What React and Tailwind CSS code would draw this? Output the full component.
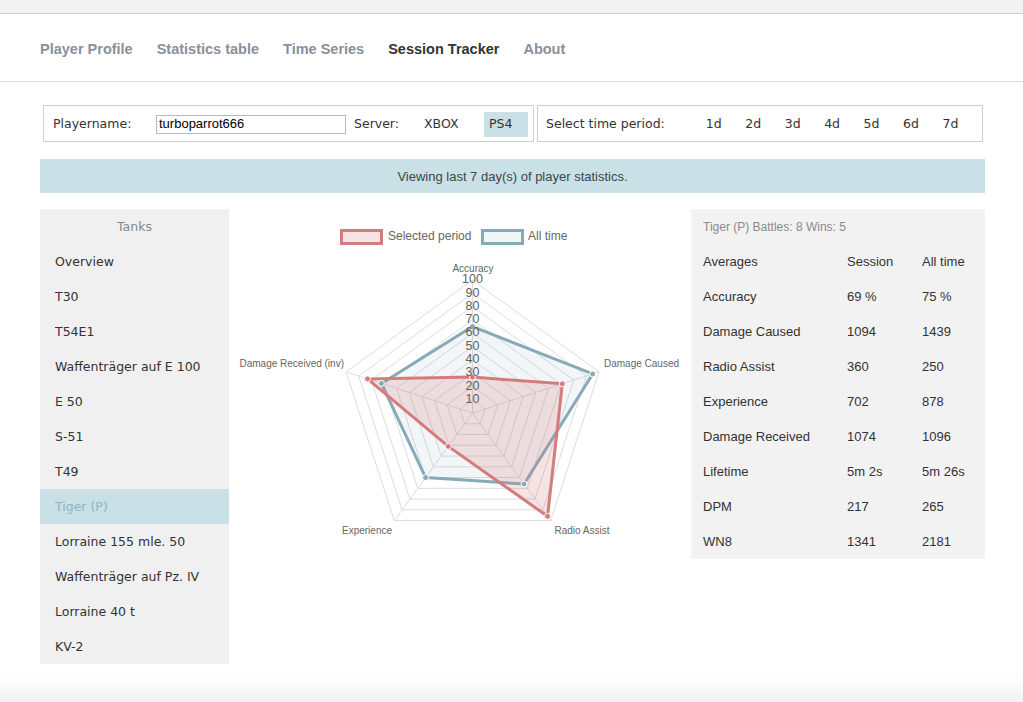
import React from 'react';

const navItems = ['Player Profile', 'Statistics table', 'Time Series', 'Session Tracker', 'About'];
const periods = ['1d', '2d', '3d', '4d', '5d', '6d', '7d'];
const tanks = [
  'Overview',
  'T30',
  'T54E1',
  'Waffenträger auf E 100',
  'E 50',
  'S-51',
  'T49',
  'Tiger (P)',
  'Lorraine 155 mle. 50',
  'Waffenträger auf Pz. IV',
  'Lorraine 40 t',
  'KV-2'
];
const rows = [
  ['Accuracy', '69 %', '75 %'],
  ['Damage Caused', '1094', '1439'],
  ['Radio Assist', '360', '250'],
  ['Experience', '702', '878'],
  ['Damage Received', '1074', '1096'],
  ['Lifetime', '5m 2s', '5m 26s'],
  ['DPM', '217', '265'],
  ['WN8', '1341', '2181']
];

// radar geometry (svg coords)
const CX = 243.5;
const CY = 204;
const R = 133;
const allTime = [65, 95, 66, 60, 72];
const session = [27, 71, 96, 31, 83];

const pt = (i, v) => {
  const a = ((-90 + 72 * i) * Math.PI) / 180;
  const r = (v / 100) * R;
  return [CX + r * Math.cos(a), CY + r * Math.sin(a)];
};
const poly = (vals) => vals.map((v, i) => pt(i, v).join(',')).join(' ');

const RadarChart = () => (
  <svg width="462" height="340" viewBox="0 0 462 340" style={{ fontFamily: '"Liberation Sans", Arial, sans-serif' }}>
    {/* legend */}
    <rect x="112.5" y="21.5" width="40" height="13" fill="rgba(212,122,122,0.2)" stroke="#d47b7b" strokeWidth="3" />
    <text x="159" y="28" fontSize="12" fill="#666" dominantBaseline="middle">Selected period</text>
    <rect x="253.5" y="21.5" width="40" height="13" fill="rgba(134,170,182,0.1)" stroke="#86aab6" strokeWidth="3" />
    <text x="299" y="28" fontSize="12" fill="#666" dominantBaseline="middle">All time</text>

    {/* grid */}
    {[10, 20, 30, 40, 50, 60, 70, 80, 90, 100].map((v) => (
      <polygon key={v} points={poly([v, v, v, v, v])} fill="none" stroke="#dcdcdc" strokeWidth="1" />
    ))}
    {[0, 1, 2, 3, 4].map((i) => {
      const [x, y] = pt(i, 100);
      return <line key={i} x1={CX} y1={CY} x2={x} y2={y} stroke="#dcdcdc" strokeWidth="1" />;
    })}

    {/* datasets */}
    <polygon points={poly(allTime)} fill="rgba(134,170,182,0.1)" stroke="#86aab6" strokeWidth="3" strokeLinejoin="round" />
    <polygon points={poly(session)} fill="rgba(212,122,122,0.2)" stroke="#d47b7b" strokeWidth="3" strokeLinejoin="round" />
    {allTime.map((v, i) => {
      const [x, y] = pt(i, v);
      return <circle key={'a' + i} cx={x} cy={y} r="3" fill="#86aab6" stroke="#fff" strokeWidth="1" />;
    })}
    {session.map((v, i) => {
      const [x, y] = pt(i, v);
      return <circle key={'s' + i} cx={x} cy={y} r="3" fill="#d47b7b" stroke="#fff" strokeWidth="1" />;
    })}

    {/* ticks */}
    {[10, 20, 30, 40, 50, 60, 70, 80, 90, 100].map((v) => (
      <text key={v} x={CX} y={CY - (v / 100) * R} fontSize="12.5" fill="#5f5f5f" textAnchor="middle" dominantBaseline="middle">
        {v}
      </text>
    ))}

    {/* point labels */}
    <text x="244" y="60" fontSize="10" fill="#666" textAnchor="middle" dominantBaseline="middle">Accuracy</text>
    <text x="375" y="155" fontSize="10" fill="#666" dominantBaseline="middle">Damage Caused</text>
    <text x="115" y="155" fontSize="10" fill="#666" textAnchor="end" dominantBaseline="middle">Damage Received (inv)</text>
    <text x="138" y="322" fontSize="10" fill="#666" textAnchor="middle" dominantBaseline="middle">Experience</text>
    <text x="353" y="322" fontSize="10" fill="#666" textAnchor="middle" dominantBaseline="middle">Radio Assist</text>
  </svg>
);

const App = () => {
  return (
    <div className="w-[1023px] min-h-[702px] bg-white text-[#333]">
      {/* top strip */}
      <div className="h-[14px] bg-[#f2f2f2] border-b border-[#c8ccd0]" />

      {/* nav */}
      <div className="h-[68px] flex items-center gap-[24px] pl-[40px] pt-[5px] border-b border-[#d8dcdf] font-['Liberation_Sans',Arial,sans-serif] text-[14.5px] font-bold">
        {navItems.map((n) => (
          <span key={n} className={n === 'Session Tracker' ? 'text-[#333]' : 'text-[#8a9099]'}>
            {n}
          </span>
        ))}
      </div>

      <div className="pl-[40px] pr-[38px] pt-[23px]">
        {/* selectors */}
        <div className="flex gap-[3px] pl-[3px] font-['DejaVu_Sans',Verdana,sans-serif] text-[12.5px] text-[#333]">
          <div className="w-[491px] shrink-0 h-[37px] border border-[#cfcfcf] flex items-center pl-[9px] pt-[1px]">
            <span className="w-[103px]">Playername:</span>
            <div className="w-[190px] h-[19px] border border-[#b9b9b9] flex items-center px-[2px] font-['Liberation_Sans',Arial,sans-serif] text-[13px] text-black">
              turboparrot666
            </div>
            <span className="ml-[8px] w-[70px]">Server:</span>
            <span className="w-[60px]">XBOX</span>
            <span className="w-[44px] h-[25px] pl-[5px] flex items-center bg-[#c8e0e6]">PS4</span>
          </div>
          <div className="w-[446px] shrink-0 h-[37px] border border-[#cfcfcf] flex items-center pl-[8px] pt-[1px]">
            <span className="w-[162px]">Select time period:</span>
            {periods.map((p) => (
              <span key={p} className="w-[40px]">{p}</span>
            ))}
          </div>
        </div>

        {/* banner */}
        <div className="mt-[17px] h-[34px] pt-[1px] bg-[#c8e0e6] flex items-center justify-center font-['Liberation_Sans',Arial,sans-serif] text-[13px] text-[#444]">
          Viewing last 7 day(s) of player statistics.
        </div>

        {/* main */}
        <div className="mt-[16px] flex items-start">
          <div className="w-[189px] shrink-0 bg-[#f0f0f0] font-['DejaVu_Sans',Verdana,sans-serif] text-[12.5px]">
            <div className="h-[35px] pt-[1px] flex items-center justify-center text-[#888]">Tanks</div>
            {tanks.map((t) => (
              <div
                key={t}
                className={
                  'h-[35px] pt-[1px] flex items-center px-[15px] whitespace-nowrap ' +
                  (t === 'Tiger (P)' ? 'bg-[#c8e0e6] text-[#8db5c1]' : 'text-[#333]')
                }
              >
                {t}
              </div>
            ))}
          </div>

          <div className="w-[462px] shrink-0">
            <RadarChart />
          </div>

          <div className="w-[294px] shrink-0 bg-[#f2f2f2] px-[12px] font-['Liberation_Sans',Arial,sans-serif] text-[13px] text-[#333]">
            <div className="h-[35px] flex items-center text-[12px] text-[#8a8a8a]">Tiger (P) Battles: 8 Wins: 5</div>
            <div className="h-[35px] flex items-center">
              <span className="w-[144px]">Averages</span>
              <span className="w-[75px]">Session</span>
              <span>All time</span>
            </div>
            {rows.map((r) => (
              <div key={r[0]} className="h-[35px] flex items-center">
                <span className="w-[144px]">{r[0]}</span>
                <span className="w-[75px]">{r[1]}</span>
                <span>{r[2]}</span>
              </div>
            ))}
          </div>
        </div>
      </div>

      {/* footer fade */}
      <div className="mt-[10px] h-[29px] bg-gradient-to-b from-white to-[#f2f2f2]" />
    </div>
  );
};

export default App;
